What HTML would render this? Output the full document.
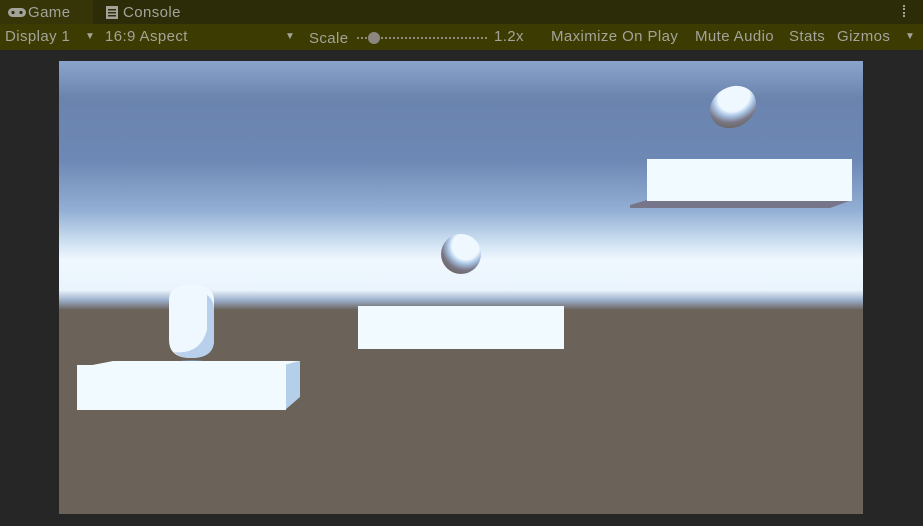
<!DOCTYPE html>
<html><head><style>
*{margin:0;padding:0;box-sizing:border-box}
body{width:923px;height:526px;background:#262626;overflow:hidden;font-family:"Liberation Sans",sans-serif;font-size:15px;color:#a3a39a;position:relative}
.tabbar{position:absolute;left:0;top:0;width:923px;height:24px;background:#2c2c08}
.tab{position:absolute;top:0;height:24px;line-height:25px}
.toolbar{position:absolute;left:0;top:24px;width:923px;height:26px;background:#3b3b02}
.t{position:absolute;top:4px;white-space:nowrap;letter-spacing:0.4px}
</style></head><body>
<div class="tabbar">
 <div class="tab" style="left:0;width:93px;background:#353507"></div>
 <div class="tab" style="left:7px;top:0">
  <svg width="20" height="24" style="position:absolute;top:0;left:0"><rect x="1" y="8" width="18" height="9" rx="4.5" fill="#a3a39a"/><circle cx="6" cy="12.5" r="1.6" fill="#2e2e0c"/><circle cx="14" cy="12.5" r="1.6" fill="#2e2e0c"/></svg>
  <span style="position:absolute;left:21px;white-space:nowrap;letter-spacing:0.4px">Game</span></div>
 <div class="tab" style="left:105px">
  <svg width="14" height="24" style="position:absolute;top:0;left:0"><rect x="1" y="6" width="12" height="13" fill="#a3a39a"/><rect x="3" y="9" width="8" height="1.5" fill="#2e2e0c"/><rect x="3" y="12" width="8" height="1.5" fill="#2e2e0c"/><rect x="3" y="15" width="8" height="1.5" fill="#2e2e0c"/></svg>
  <span style="position:absolute;left:18px;white-space:nowrap;letter-spacing:0.4px">Console</span></div>
 <div style="position:absolute;left:903px;top:5px;width:2px;height:12px;border-left:2px dotted #a3a39a"></div>
</div>
<div class="toolbar">
 <span class="t" style="left:5px">Display 1</span>
 <span class="t" style="left:85px;font-size:10px;top:7px">▼</span>
 <span class="t" style="left:105px">16:9 Aspect</span>
 <span class="t" style="left:285px;font-size:10px;top:7px">▼</span>
 <span class="t" style="left:309px;top:6px">Scale</span>
 <div style="position:absolute;left:357px;top:13px;width:130px;height:2px;border-top:2px dotted #8a8a80"></div>
 <div style="position:absolute;left:368px;top:8px;width:12px;height:12px;border-radius:6px;background:#8c8680"></div>
 <span class="t" style="left:494px">1.2x</span>
 <span class="t" style="left:551px">Maximize On Play</span>
 <span class="t" style="left:695px">Mute Audio</span>
 <span class="t" style="left:789px">Stats</span>
 <span class="t" style="left:837px">Gizmos</span>
 <span class="t" style="left:905px;font-size:10px;top:7px">▼</span>
</div>
<svg style="position:absolute;left:59px;top:61px" width="804" height="453" viewBox="59 61 804 453">
 <defs>
  <linearGradient id="sky" x1="0" y1="61" x2="0" y2="310" gradientUnits="userSpaceOnUse">
   <stop offset="0" stop-color="#8ba4cc"/>
   <stop offset="0.15" stop-color="#6a84ae"/>
   <stop offset="0.4" stop-color="#6d88b4"/>
   <stop offset="0.6" stop-color="#93afd4"/>
   <stop offset="0.73" stop-color="#cfe1f2"/>
   <stop offset="0.8" stop-color="#f0f8ff"/>
   <stop offset="0.92" stop-color="#eaf4fc"/>
   <stop offset="0.96" stop-color="#9cb0cc"/>
   <stop offset="1" stop-color="#6b625a"/>
  </linearGradient>
  <radialGradient id="sph" cx="0.62" cy="0.3" r="0.75"><stop offset="0.45" stop-color="#f0f8ff"/><stop offset="0.6" stop-color="#a8c4e4"/><stop offset="0.8" stop-color="#7a7888"/><stop offset="1" stop-color="#6a6460"/></radialGradient>
 </defs>
 <rect x="59" y="61" width="804" height="453" fill="#6b625a"/>
 <rect x="59" y="61" width="804" height="250" fill="url(#sky)"/>
 <polygon points="630,205 647,200 852,200 830,208 630,208" fill="#76758a"/>
 <rect x="647" y="159" width="205" height="42" fill="#f0faff"/>
 <circle cx="461" cy="254" r="20" fill="url(#sph)"/>
 <ellipse cx="733" cy="107" rx="24" ry="20" transform="rotate(-30 733 107)" fill="url(#sph)"/>
 <rect x="358" y="306" width="206" height="43" fill="#f0faff"/>
 <path d="M169,300 Q169,285 191,285 Q214,285 214,300 L214,340 Q214,358 191,358 Q169,358 169,340Z" fill="#f0f8ff"/>
 <path d="M207,295 Q214,300 214,310 L214,340 Q214,358 191,358 Q180,358 174,352 Q200,355 207,330Z" fill="#b8d0ec"/>
 <ellipse cx="192" cy="363" rx="16" ry="3" fill="#7888a6"/>
 <polygon points="285,365 300,361 300,397 285,410" fill="#b4cfea"/>
 <polygon points="77,368 113,361 300,361 285,365 77,370" fill="#f0faff"/>
 <rect x="77" y="365" width="209" height="45" fill="#f0faff"/>
</svg>
</body></html>
